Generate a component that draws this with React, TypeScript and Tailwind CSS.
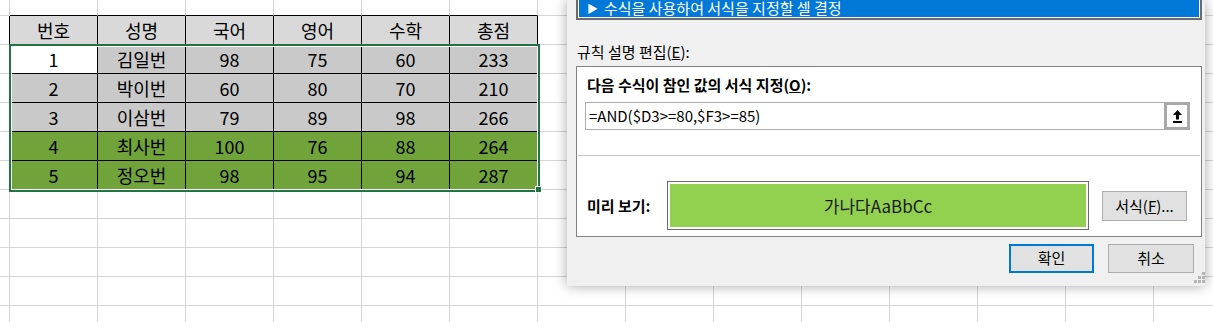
import React from "react";

const header = ["번호", "성명", "국어", "영어", "수학", "총점"];
const data: (string | number)[][] = [
  [1, "김일번", 98, 75, 60, 233],
  [2, "박이번", 60, 80, 70, 210],
  [3, "이삼번", 79, 89, 98, 266],
  [4, "최사번", 100, 76, 88, 264],
  [5, "정오번", 98, 95, 94, 287],
];

const NCOLS = 15; // col A (partial) + 14
const NROWS = 12; // row 0 (partial) + 11

function cellClass(r: number, c: number): string {
  const inTable = r >= 1 && r <= 6 && c >= 1 && c <= 6;
  if (inTable) {
    let bg = "bg-[#c9c9c9]";
    if (r === 1) bg = "bg-[#d9d9d9]";
    else if (r === 2 && c === 1) bg = "bg-white";
    else if (r >= 5) bg = "bg-[#71a33b]";
    return "border-r border-b border-black flex items-center justify-center " + bg;
  }
  if (r === 0 && c >= 1 && c <= 6) return "border-r border-r-[#d4d4d4] border-b border-b-black";
  if (c === 0 && r >= 1 && r <= 6) return "border-r border-r-black border-b border-b-[#d4d4d4]";
  return "border-r border-b border-[#d4d4d4]";
}

function cellText(r: number, c: number): string {
  if (r === 1 && c >= 1 && c <= 6) return header[c - 1];
  if (r >= 2 && r <= 6 && c >= 1 && c <= 6) return String(data[r - 2][c - 1]);
  return "";
}

function Sheet() {
  const cells: React.ReactNode[] = [];
  for (let r = 0; r < NROWS; r++) {
    for (let c = 0; c < NCOLS; c++) {
      cells.push(
        <div key={r + "-" + c} className={cellClass(r, c)}>
          {cellText(r, c)}
        </div>
      );
    }
  }
  return (
    <div className="grid grid-cols-[10px_repeat(14,88px)] grid-rows-[16px_repeat(11,29px)] text-[18px] leading-[28px] text-black">
      {cells}
    </div>
  );
}

function UpArrow() {
  return (
    <svg width="9" height="13" viewBox="0 0 9 13">
      <polygon points="4.5,0 0,5 3,5 3,9.5 6,9.5 6,5 9,5" fill="#000" />
      <rect x="0" y="11" width="9" height="2" fill="#000" />
    </svg>
  );
}

function Grip() {
  const pts = [
    [8, 0],
    [4, 4],
    [8, 4],
    [0, 8],
    [4, 8],
    [8, 8],
  ];
  return (
    <svg width="11" height="11" viewBox="0 0 11 11">
      {pts.map(([x, y], i) => (
        <rect key={i} x={x} y={y} width="3" height="3" fill="#b4b4b4" />
      ))}
    </svg>
  );
}

function Dialog() {
  return (
    <div className="absolute left-[567px] top-0 w-[638px] h-[286px] bg-[#f0f0f0] shadow-[0_0_12px_rgba(0,0,0,0.35)] text-[15px] text-black flex flex-col">
      {/* rule type list */}
      <div className="-mt-[8px] ml-[9px] mr-[3px] border-2 border-[#6b6b6b] bg-white p-px">
        <div className="h-[22px] bg-[#0078d7] text-white flex items-end pl-[8px] leading-[18px] whitespace-nowrap">
          <span className="text-[11px] leading-[18px]">▶</span>
          <span className="ml-[6px]">수식을 사용하여 서식을 지정할 셀 결정</span>
        </div>
      </div>

      <div className="mt-[22px] ml-[10px] leading-[20px]">
        규칙 설명 편집(<span className="underline">E</span>):
      </div>

      <div className="mt-[4px] ml-[9px] mr-[3px] h-[171px] border border-[#828282] bg-white flex flex-col">
        <div className="mt-[8px] ml-[10px] font-bold leading-[20px]">
          다음 수식이 참인 값의 서식 지정(<span className="underline">O</span>):
        </div>
        <div className="mt-[7px] ml-[8px] w-[605px] h-[28px] border border-[#adadad] flex items-stretch">
          <div className="flex-1 pl-[3px] flex items-center leading-[20px]">=AND($D3&gt;=80,$F3&gt;=85)</div>
          <div className="-my-px -mr-px w-[26px] border-[3px] border-[#a9a9a9] bg-white flex items-center justify-center">
            <UpArrow />
          </div>
        </div>
        <div className="mt-[25px] mx-px h-px bg-[#c6c6c6]" />
        <div className="mt-[25px] flex items-center">
          <div className="ml-[10px] w-[80px] font-bold leading-[20px] whitespace-nowrap">미리 보기:</div>
          <div className="w-[422px] h-[49px] border border-[#6d6d6d] p-[2px] bg-white">
            <div className="w-full h-full bg-[#92d050] flex items-center justify-center text-[17px] text-[#1a1a1a]">
              가나다AaBbCc
            </div>
          </div>
          <div className="ml-[13px] w-[85px] h-[30px] border border-[#adadad] bg-[#e1e1e1] flex items-center justify-center leading-[20px]">
            서식(<span className="underline">F</span>)...
          </div>
        </div>
      </div>

      <div className="mt-[7px] mr-[11px] flex justify-end gap-[14px]">
        <div className="w-[85px] h-[29px] border-2 border-[#0078d7] bg-[#e1e1e1] flex items-center justify-center">
          확인
        </div>
        <div className="w-[86px] h-[29px] border border-[#adadad] bg-[#e1e1e1] flex items-center justify-center">
          취소
        </div>
      </div>

      <div className="absolute right-[0px] bottom-[3px]">
        <Grip />
      </div>
    </div>
  );
}

export default function App() {
  return (
    <div className="relative w-[1213px] h-[322px] overflow-hidden bg-white font-['Noto_Sans_CJK_KR',sans-serif]">
      <Sheet />
      {/* selection border */}
      <div className="absolute left-[9px] top-[44px] w-[531px] h-[148px] border-2 border-[#217346] shadow-[inset_0_0_0_1px_#ffffff] pointer-events-none" />
      <div className="absolute left-[535px] top-[186px] w-[7px] h-[7px] bg-[#217346] border border-white" />
      <Dialog />
    </div>
  );
}
